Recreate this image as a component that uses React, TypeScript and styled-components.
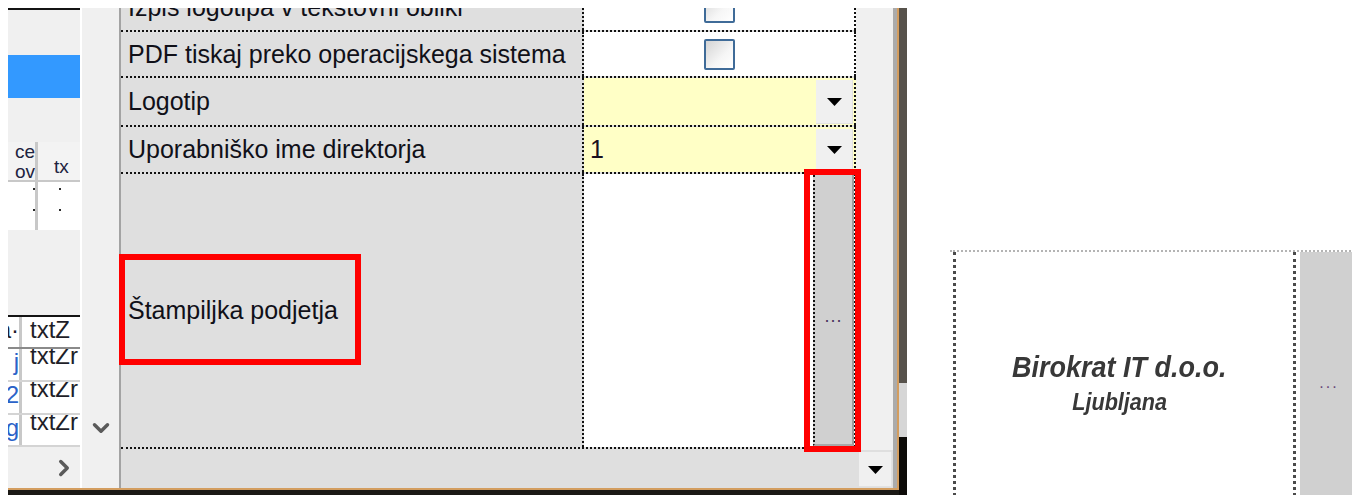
import styled, { createGlobalStyle } from "styled-components"
import { ChevronDown, ChevronRight } from "lucide-react"

const GlobalStyle = createGlobalStyle`
  html, body {
    margin: 0;
    padding: 0;
    background: #fff;
  }
  body {
    font-family: "Liberation Sans", Arial, sans-serif;
  }
`

const Page = styled.div`
  display: flex;
  width: 1352px;
  height: 495px;
  padding: 8px 0 0 8px;
  box-sizing: border-box;
  overflow: hidden;
  background: #fff;
`

/* ---------- left capture: the settings window ---------- */

const Shot = styled.div`
  position: relative;
  display: flex;
  flex-shrink: 0;
  width: 899px;
  height: 487px;
`

const FrameCol = styled.div`
  display: flex;
  flex-direction: column;
  width: 891px;
  background: #1b1915;
`

const Window = styled.div`
  display: flex;
  height: 480px;
  border-right: 2px solid #d39d5f;
  border-bottom: 2px solid #d39d5f;
  background: #f0f0f0;
`

const DarkStrip = styled.div`
  display: flex;
  flex-direction: column;
  width: 8px;
`

const StripPart = styled.div<{ $h?: number; $c: string }>`
  height: ${(p) => (p.$h ? `${p.$h}px` : "auto")};
  flex: ${(p) => (p.$h ? "none" : "1")};
  background: ${(p) => p.$c};
`

/* left data grid fragment */
const LeftGrid = styled.div`
  display: flex;
  flex-direction: column;
  width: 72px;
  flex-shrink: 0;
  overflow: hidden;
  background: #f0f0f0;
`

const Rule = styled.div`
  height: 2px;
  background: #141414;
`

const Pane = styled.div<{ $h: number }>`
  height: ${(p) => p.$h}px;
  background: #f0f0f0;
`

const Selection = styled.div`
  height: 43px;
  background: #3399ff;
`

const MiniRow = styled.div<{ $h: number; $head?: boolean }>`
  display: grid;
  grid-template-columns: 30px 1fr;
  height: ${(p) => p.$h}px;
  background: ${(p) => (p.$head ? "#f3f3f3" : "#fff")};
  border-bottom: ${(p) => (p.$head ? "2px solid #c8c8c8" : "none")};
  box-sizing: border-box;
  overflow: hidden;
`

const MiniCell = styled.div<{ $right?: boolean; $pl?: number }>`
  display: flex;
  flex-direction: column;
  align-items: ${(p) => (p.$right ? "flex-end" : "flex-start")};
  padding-left: ${(p) => p.$pl ?? 0}px;
  border-right: ${(p) => (p.$right ? "3px solid #c8c8c8" : "none")};
  overflow: hidden;
  font-size: 19px;
  line-height: 20px;
  color: #1d2340;
`

const Dot = styled.span<{ $mt: number; $ml: number }>`
  display: block;
  width: 2px;
  height: 2px;
  margin: ${(p) => p.$mt}px 0 0 ${(p) => p.$ml}px;
  background: #2a2a2a;
`

const GridTable = styled.div`
  background: #fff;
`

const GridRow = styled.div<{ $h: number; $head?: boolean }>`
  display: grid;
  grid-template-columns: 14px 1fr;
  height: ${(p) => p.$h}px;
  border-bottom: 2px solid ${(p) => (p.$head ? "#8a8a8a" : "#d4d4d4")};
  box-sizing: border-box;
  overflow: hidden;
`

const GridCell = styled.div<{ $first?: boolean; $blue?: boolean }>`
  display: flex;
  justify-content: ${(p) => (p.$first ? "flex-end" : "flex-start")};
  padding-left: ${(p) => (p.$first ? 0 : 8)}px;
  border-right: ${(p) => (p.$first ? "3px solid #c8c8c8" : "none")};
  overflow: hidden;
  white-space: nowrap;
  font-size: 24px;
  line-height: 26px;
  color: ${(p) => (p.$blue ? "#2a62c8" : "#1e1e28")};
`

const GridFooter = styled.div`
  display: flex;
  align-items: center;
  flex: 1;
  padding-left: 43px;
  color: #5a5a5a;
`

const Gutter = styled.div`
  display: flex;
  flex-direction: column;
  justify-content: flex-end;
  align-items: center;
  width: 39px;
  flex-shrink: 0;
  box-sizing: border-box;
  padding-bottom: 47px;
  border-left: 2px solid #fff;
  background: #f0f0f0;
  color: #5a5a5a;
`

/* property grid */
const PropGrid = styled.div`
  display: flex;
  flex-direction: column;
  width: 778px;
  flex-shrink: 0;
  box-sizing: border-box;
  border-left: 2px solid #a3a3a3;
  border-right: 4px solid #ababab;
  background: #dfdfdf;
`

const RowsArea = styled.div`
  display: flex;
  height: 442px;
  overflow: hidden;
`

const PropTable = styled.div`
  width: 735px;
  margin-top: -24px;
`

const PropRow = styled.div<{ $h: number }>`
  display: flex;
  height: ${(p) => p.$h}px;
  box-sizing: border-box;
  border-bottom: 2px dotted #111;
`

const Label = styled.div`
  display: flex;
  align-items: center;
  width: 463px;
  box-sizing: border-box;
  padding-left: 7px;
  border-right: 2px dotted #111;
  background: #dfdfdf;
  font-size: 25px;
  color: #101018;
  white-space: nowrap;
`

const Value = styled.div<{ $bg: string }>`
  display: flex;
  align-items: stretch;
  width: 272px;
  box-sizing: border-box;
  border-right: 2px dotted #111;
  background: ${(p) => p.$bg};
`

const ValueText = styled.div`
  display: flex;
  align-items: center;
  flex: 1;
  padding-left: 6px;
  font-size: 25px;
  color: #1a1020;
`

const CheckCell = styled.div`
  display: flex;
  align-items: center;
  justify-content: center;
  flex: 1;
`

const CheckBox = styled.span`
  display: block;
  width: 31px;
  height: 31px;
  box-sizing: border-box;
  border: 2px solid #3f6b98;
  border-radius: 2px;
  background: linear-gradient(135deg, #d4d4d4 0%, #f6f6f6 60%, #fff 100%);
`

const DropBtn = styled.div<{ $w: number }>`
  display: flex;
  align-items: center;
  justify-content: center;
  width: ${(p) => p.$w}px;
  margin: 2px 1px 1px 0;
  background: #f0f0f0;
  box-shadow: inset -1px -1px 0 #e2e2e2;
`

const EllipsisBtn = styled.div`
  display: flex;
  align-items: center;
  justify-content: center;
  width: 41px;
  margin: 1px 0 1px 0;
  padding-top: 14px;
  box-sizing: border-box;
  border-left: 2px dotted #111;
  border-right: 2px solid #9c9c9c;
  border-bottom: 2px solid #a8a8a8;
  background: #d0d0d0;
  font-size: 18px;
  letter-spacing: 1px;
  color: #4a3060;
`

const ScrollTrack = styled.div`
  width: 37px;
  background: #f0f0f0;
`

const BottomBar = styled.div`
  display: flex;
  height: 38px;
`

const BottomField = styled.div`
  flex: 1;
  background: #dfdfdf;
`

/* red callouts drawn over the capture */
const Callout = styled.div<{ $x: number; $y: number; $w: number; $h: number }>`
  position: absolute;
  left: ${(p) => p.$x}px;
  top: ${(p) => p.$y}px;
  width: ${(p) => p.$w}px;
  height: ${(p) => p.$h}px;
  box-sizing: border-box;
  border: 6px solid #ff0000;
  pointer-events: none;
`

/* ---------- right capture: stamp preview ---------- */

const StampPanel = styled.div`
  flex: 1;
  padding: 242px 0 0 43px;
  overflow: hidden;
`

const StampRow = styled.div`
  display: flex;
  width: 420px;
  border-top: 2px dotted #b4b4b4;
`

const StampCell = styled.div`
  display: flex;
  flex-direction: column;
  align-items: center;
  justify-content: center;
  gap: 4px;
  width: 343px;
  height: 262px;
  margin-left: 3px;
  padding-right: 10px;
  box-sizing: border-box;
  border-left: 3px dotted #4a4a4a;
  border-right: 3px dotted #4a4a4a;
  background: #fff;
`

const StampLine = styled.span<{ $size: number }>`
  display: inline-block;
  font-size: ${(p) => p.$size}px;
  font-weight: 700;
  font-style: italic;
  color: #383838;
  transform: scaleX(0.9);
  filter: blur(0.7px);
  white-space: nowrap;
`

const StampBtn = styled.div`
  display: flex;
  align-items: center;
  justify-content: center;
  width: 58px;
  height: 262px;
  margin-left: 4px;
  flex-shrink: 0;
  background: #d0d0d0;
  font-size: 16px;
  letter-spacing: 2px;
  color: #6a4a7a;
`

function DownTriangle({ w = 15 }: { w?: number }) {
  return (
    <svg width={w} height={8} viewBox="0 0 15 8">
      <polygon points="0,0 15,0 7.5,8" fill="#000" />
    </svg>
  )
}

const rows = [
  { h: 48, label: "Izpis logotipa v tekstovni obliki", kind: "check" },
  { h: 46, label: "PDF tiskaj preko operacijskega sistema", kind: "check" },
  { h: 49, label: "Logotip", kind: "combo", value: "" },
  { h: 47, label: "Uporabniško ime direktorja", kind: "combo", value: "1" },
  { h: 275, label: "Štampiljka podjetja", kind: "image" },
]

export default function App() {
  return (
    <>
      <GlobalStyle />
      <Page>
        <Shot>
          <FrameCol>
            <Window>
              <LeftGrid>
                <Rule />
                <Pane $h={45} />
                <Selection />
                <Pane $h={44} />
                <MiniRow $h={40} $head>
                  <MiniCell $right>
                    <span>ce</span>
                    <span>ov</span>
                  </MiniCell>
                  <MiniCell $pl={16}>
                    <span style={{ marginTop: 15 }}>tx</span>
                  </MiniCell>
                </MiniRow>
                <MiniRow $h={48}>
                  <MiniCell $right>
                    <Dot $mt={6} $ml={-23} />
                    <Dot $mt={19} $ml={-23} />
                  </MiniCell>
                  <MiniCell>
                    <Dot $mt={6} $ml={21} />
                    <Dot $mt={19} $ml={21} />
                  </MiniCell>
                </MiniRow>
                <Pane $h={85} />
                <Rule />
                <GridTable>
                  <GridRow $h={32} $head>
                    <GridCell $first>a·</GridCell>
                    <GridCell>txtZ</GridCell>
                  </GridRow>
                  {["j", "2", "g"].map((c, i) => (
                    <GridRow key={i} $h={i === 2 ? 32 : 33}>
                      <GridCell $first $blue>
                        {c}
                      </GridCell>
                      <GridCell style={{ marginTop: -6 }}>txtZr</GridCell>
                    </GridRow>
                  ))}
                </GridTable>
                <GridFooter>
                  <ChevronRight size={26} strokeWidth={3.2} />
                </GridFooter>
              </LeftGrid>

              <Gutter>
                <ChevronDown size={26} strokeWidth={3.2} />
              </Gutter>

              <PropGrid>
                <RowsArea>
                  <PropTable>
                    {rows.map((r) => (
                      <PropRow key={r.label} $h={r.h}>
                        <Label>{r.label}</Label>
                        {r.kind === "check" && (
                          <Value $bg="#fff">
                            <CheckCell>
                              <CheckBox />
                            </CheckCell>
                          </Value>
                        )}
                        {r.kind === "combo" && (
                          <Value $bg="#ffffc6">
                            <ValueText>{r.value}</ValueText>
                            <DropBtn $w={37}>
                              <DownTriangle />
                            </DropBtn>
                          </Value>
                        )}
                        {r.kind === "image" && (
                          <Value $bg="#fff">
                            <ValueText />
                            <EllipsisBtn>...</EllipsisBtn>
                          </Value>
                        )}
                      </PropRow>
                    ))}
                  </PropTable>
                  <ScrollTrack />
                </RowsArea>
                <BottomBar>
                  <BottomField />
                  <DropBtn $w={33}>
                    <DownTriangle />
                  </DropBtn>
                </BottomBar>
              </PropGrid>
            </Window>
          </FrameCol>
          <DarkStrip>
            <StripPart $h={375} $c="#57524b" />
            <StripPart $h={54} $c="#d6d6d6" />
            <StripPart $c="#0d0b08" />
          </DarkStrip>

          <Callout $x={111} $y={246} $w={242} $h={111} />
          <Callout $x={796} $y={161} $w={57} $h={283} />
        </Shot>

        <StampPanel>
          <StampRow>
            <StampCell>
              <StampLine $size={30}>Birokrat IT d.o.o.</StampLine>
              <StampLine $size={24}>Ljubljana</StampLine>
            </StampCell>
            <StampBtn>...</StampBtn>
          </StampRow>
        </StampPanel>
      </Page>
    </>
  )
}
